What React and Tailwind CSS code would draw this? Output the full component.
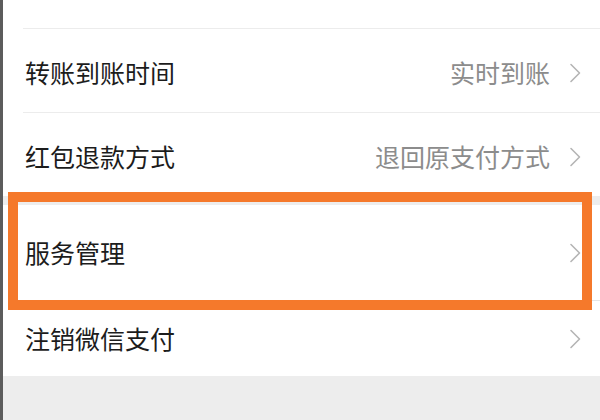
import { Fragment } from "react";

const font = { fontFamily: '"Noto Sans CJK SC", "Noto Sans", sans-serif' };

function Chevron() {
  return (
    <svg width="12" height="20" viewBox="0 0 12 20" className="shrink-0">
      <polyline points="2,1.5 10.5,10 2,18.5" fill="none" stroke="#b5b5b5" strokeWidth="1.6" strokeLinecap="round" strokeLinejoin="round" />
    </svg>
  );
}

function Row({ label, value, className }) {
  return (
    <div className={`flex items-center justify-between pl-[22px] pr-[19px] bg-white ${className}`}>
      <span className="text-[25px] text-[#1c1c1c] leading-none">{label}</span>
      <div className="flex items-center gap-[19px]">
        {value && <span className="text-[25px] text-[#8c8c8c] leading-none">{value}</span>}
        <Chevron />
      </div>
    </div>
  );
}

export default function App() {
  return (
    <div className="w-[600px] h-[420px] overflow-hidden bg-white border-l-[3px] border-[#5c5c5c] flex flex-col" style={font}>
      <div className="h-[28px] shrink-0" />
      <div className="ml-[20px] border-t border-[#ececec]" />
      <Row label="转账到账时间" value="实时到账" className="h-[83px] pt-1 shrink-0" />
      <div className="ml-[20px] border-t border-[#ececec]" />
      <Row label="红包退款方式" value="退回原支付方式" className="h-[83px] pt-1 shrink-0" />
      <div className="relative shrink-0">
        <div className="h-[9px] bg-[#ededed]" />
        <Row label="服务管理" className="h-[95px]" />
        <div className="ml-[20px] border-t border-[#e6e6e6]" />
        <div className="absolute left-[5px] right-[8px] top-[-4px] bottom-[-9px] border-[10px] border-[#f5792b] pointer-events-none" />
      </div>
      <Row label="注销微信支付" className="h-[75px] shrink-0" />
      <div className="flex-1 bg-[#ededed]" />
    </div>
  );
}
